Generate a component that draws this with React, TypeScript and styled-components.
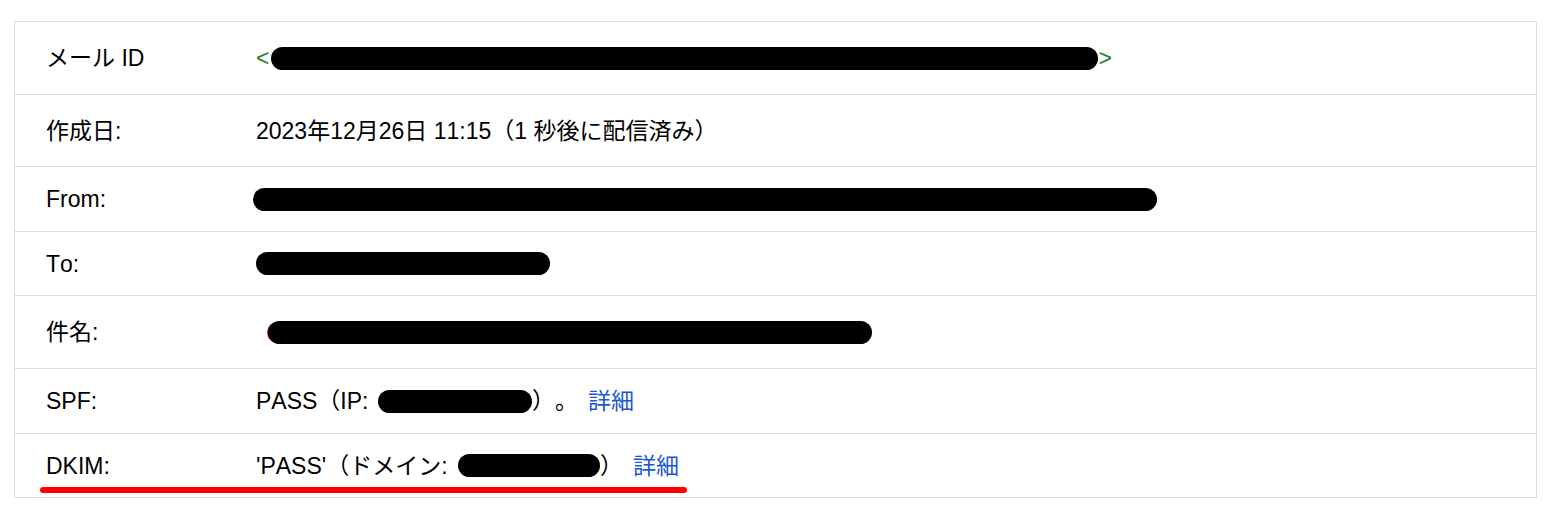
import type { ReactNode } from "react";
import styled, { createGlobalStyle } from "styled-components";

const GlobalStyle = createGlobalStyle`
  html, body {
    margin: 0;
    padding: 0;
    background: #ffffff;
  }
  body {
    font-family: "Liberation Sans", Arial, "Noto Sans CJK JP", sans-serif;
    color: #000000;
  }
`;

const Page = styled.div`
  padding: 21px 15px 0 14px;
`;

const Table = styled.div`
  border: 1px solid #dddddd;
  border-top: none;
  width: 1521px;
`;

const TableRow = styled.div<{ $height: number }>`
  position: relative;
  display: grid;
  grid-template-columns: 241px 1fr;
  align-items: center;
  height: ${({ $height }) => $height}px;
  border-top: 1px solid #dddddd;
  font-size: 23px;
  line-height: 26px;
  white-space: nowrap;
  text-spacing-trim: space-all;
  font-kerning: none;
  font-feature-settings: "halt" 0, "chws" 0, "kern" 0;
`;

const Label = styled.div`
  padding-left: 31px;
`;

const Value = styled.div`
  display: flex;
  align-items: center;
`;

const Angle = styled.span`
  color: #2a7d2e;
`;

const Redact = styled.span<{ $width: number; $shift: number; $edge?: boolean }>`
  display: inline-block;
  width: ${({ $width }) => $width}px;
  height: 23px;
  margin-left: ${({ $shift }) => $shift}px;
  background: #000000;
  border-radius: 12px;
  box-shadow: ${({ $edge }) => ($edge ? "-2px 0 0 -1px #c81e1e" : "none")};
`;

const Link = styled.a`
  color: #1a57d6;
  text-decoration: none;
  margin-left: 10px;
`;

const Underline = styled.span`
  position: absolute;
  left: 25px;
  top: 53px;
  width: 647px;
  height: 6px;
  background: #ff0000;
  border-radius: 3px;
`;

type Row = {
  label: string;
  height: number;
  value: ReactNode;
  marked?: boolean;
};

const getRows = (): Row[] => [
  {
    label: "メール ID",
    height: 72,
    value: (
      <>
        <Angle>&lt;</Angle>
        <Redact $width={827} $shift={2} />
        <Angle>&gt;</Angle>
      </>
    ),
  },
  {
    label: "作成日:",
    height: 71,
    value: <>2023年12月26日 11:15（1 秒後に配信済み）</>,
  },
  {
    label: "From:",
    height: 64,
    value: <Redact $width={904} $shift={-3} />,
  },
  {
    label: "To:",
    height: 63,
    value: <Redact $width={294} $shift={0} />,
  },
  {
    label: "件名:",
    height: 72,
    value: <Redact $width={604} $shift={12} $edge />,
  },
  {
    label: "SPF:",
    height: 64,
    value: (
      <>
        PASS（IP:&nbsp;<Redact $width={154} $shift={3} />）。<Link href="#">詳細</Link>
      </>
    ),
  },
  {
    label: "DKIM:",
    height: 63,
    marked: true,
    value: (
      <>
        'PASS'（ドメイン:&nbsp;<Redact $width={142} $shift={4} />）<Link href="#">詳細</Link>
      </>
    ),
  },
];

export default function App() {
  const rows = getRows();
  return (
    <>
      <GlobalStyle />
      <Page lang="ja">
        <Table>
          {rows.map((row) => (
            <TableRow key={row.label} $height={row.height}>
              <Label>{row.label}</Label>
              <Value>{row.value}</Value>
              {row.marked && <Underline />}
            </TableRow>
          ))}
        </Table>
      </Page>
    </>
  );
}
